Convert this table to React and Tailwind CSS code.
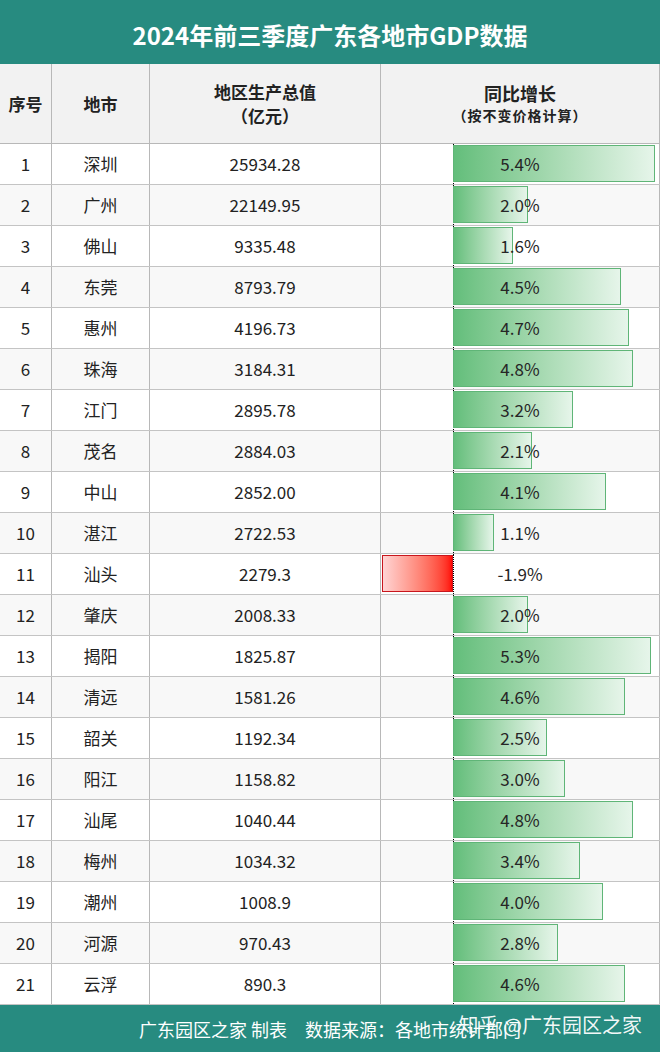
import React from "react";

const rows = [
  ["深圳", "25934.28", 5.4],
  ["广州", "22149.95", 2.0],
  ["佛山", "9335.48", 1.6],
  ["东莞", "8793.79", 4.5],
  ["惠州", "4196.73", 4.7],
  ["珠海", "3184.31", 4.8],
  ["江门", "2895.78", 3.2],
  ["茂名", "2884.03", 2.1],
  ["中山", "2852.00", 4.1],
  ["湛江", "2722.53", 1.1],
  ["汕头", "2279.3", -1.9],
  ["肇庆", "2008.33", 2.0],
  ["揭阳", "1825.87", 5.3],
  ["清远", "1581.26", 4.6],
  ["韶关", "1192.34", 2.5],
  ["阳江", "1158.82", 3.0],
  ["汕尾", "1040.44", 4.8],
  ["梅州", "1034.32", 3.4],
  ["潮州", "1008.9", 4.0],
  ["河源", "970.43", 2.8],
  ["云浮", "890.3", 4.6],
];

// px per 1% of growth
const SCALE = 37.4;

function GrowthCell({ value }) {
  const w = Math.round(Math.abs(value) * SCALE);
  return (
    <div className="relative flex h-full border-r border-[#b8b8b8]">
      <div className="flex w-[72px] justify-end pt-[1px]">
        {value < 0 && (
          <div
            className="h-[37px] border border-[#c8161d] bg-gradient-to-r from-[#ffd4d4] to-[#ff0000]"
            style={{ width: w }}
          />
        )}
      </div>
      <div className="flex-1 border-l border-dotted border-black pt-[1px]">
        {value > 0 && (
          <div
            className="-ml-px h-[37px] border border-[#5fb577] bg-gradient-to-r from-[#63be7b] to-[#e6f5ea]"
            style={{ width: w }}
          />
        )}
      </div>
      <div className="absolute inset-0 flex items-center justify-center text-[17px] text-[#262626]">
        {value.toFixed(1)}%
      </div>
    </div>
  );
}

export default function App() {
  return (
    <div className="w-[660px] h-[1053px] bg-white font-['Noto_Sans_CJK_SC','Noto_Sans',sans-serif] text-[#222]">
      <div className="flex h-[64px] items-center justify-center bg-[#278b80] pt-[6px] text-[24px] font-bold text-white">
        2024年前三季度广东各地市GDP数据
      </div>

      <div className="grid h-[80px] grid-cols-[52px_98px_231px_1fr] border-b border-[#b8b8b8] bg-[#f2f2f2] font-bold">
        <div className="flex items-center justify-center border-r border-[#b8b8b8] text-[17px]">
          序号
        </div>
        <div className="flex items-center justify-center border-r border-[#b8b8b8] text-[17px]">
          地市
        </div>
        <div className="flex flex-col items-center justify-center gap-[1px] border-r border-[#b8b8b8] text-[17px] leading-[23px]">
          <span>地区生产总值</span>
          <span>（亿元）</span>
        </div>
        <div className="flex flex-col items-center justify-center border-r border-[#b8b8b8] leading-[22px]">
          <span className="text-[18px]">同比增长</span>
          <span className="text-[14px] tracking-[1px]">（按不变价格计算）</span>
        </div>
      </div>

      {rows.map(([city, gdp, g], i) => (
        <div
          key={city}
          className={
            "grid h-[41px] grid-cols-[52px_98px_231px_1fr] border-b border-[#c4c4c4] text-[17px] " +
            (i % 2 === 1 ? "bg-[#f8f8f8]" : "bg-white")
          }
        >
          <div className="flex items-center justify-center border-r border-[#b8b8b8]">
            {i + 1}
          </div>
          <div className="flex items-center justify-center border-r border-[#b8b8b8]">
            {city}
          </div>
          <div className="flex items-center justify-center border-r border-[#b8b8b8]">
            {gdp}
          </div>
          <GrowthCell value={g} />
        </div>
      ))}

      <div className="relative flex h-[47px] items-center justify-center bg-[#278b80] pt-[2px] text-[18px] text-white">
        <span>广东园区之家 制表　数据来源：各地市统计部门</span>
        <span className="absolute right-[18px] top-[5px] text-[20px] text-white/95">
          知乎 @广东园区之家
        </span>
      </div>
    </div>
  );
}
